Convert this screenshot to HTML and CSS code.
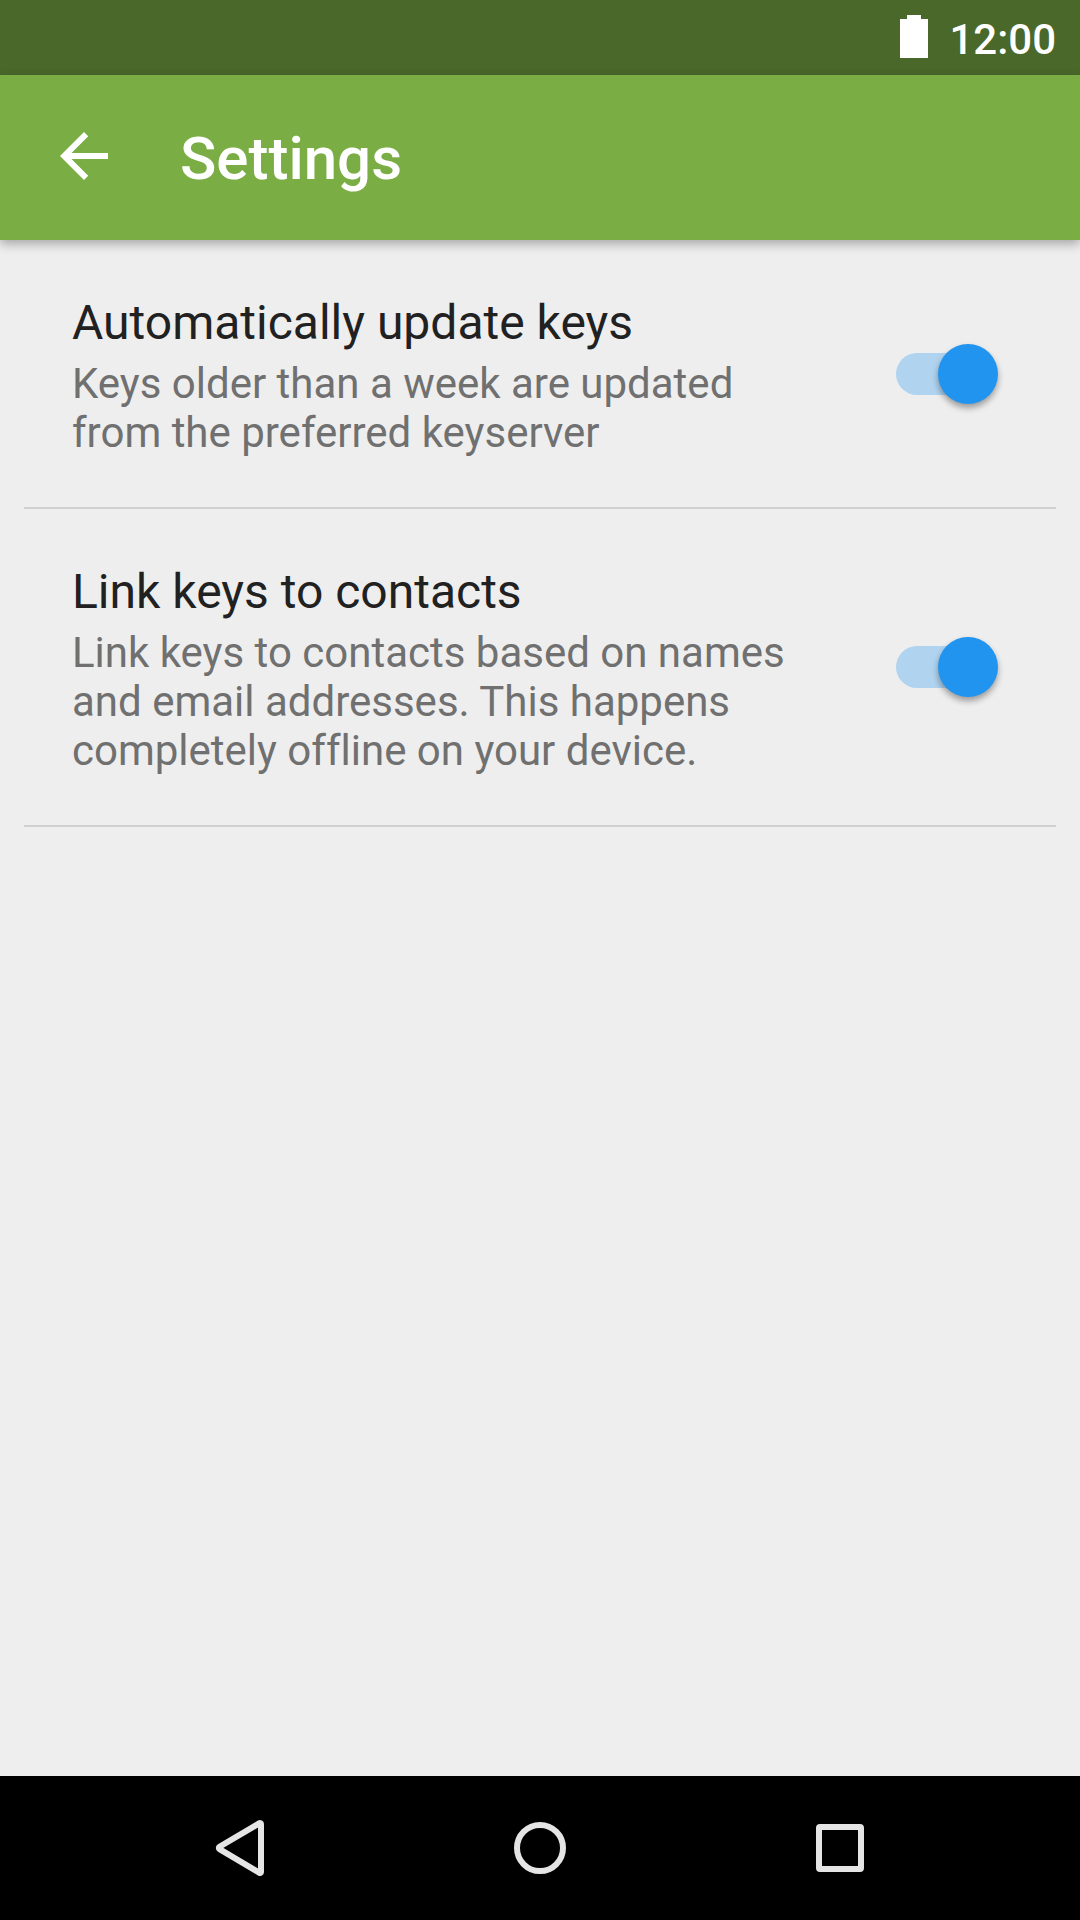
FILE: index.html
```html
<!DOCTYPE html>
<html lang="en">
<head>
  <meta charset="utf-8">
  <meta name="viewport" content="width=device-width, initial-scale=1">
  <title>Settings</title>
  <link rel="stylesheet" href="styles.css">
</head>
<body>
  <div class="status-bar">
    <svg class="battery" viewBox="0 0 28 43" role="img" aria-label="Battery full">
      <path d="M7 0h14v4h7v39H0V4h7z"/>
    </svg>
    <time class="clock">12:00</time>
  </div>

  <header class="toolbar">
    <button class="back-button" type="button" aria-label="Back">
      <svg viewBox="0 0 24 24" aria-hidden="true">
        <path d="M20 11H7.83l5.59-5.59L12 4l-8 8 8 8 1.41-1.41L7.83 13H20v-2z"/>
      </svg>
    </button>
    <h1 class="title">Settings</h1>
  </header>

  <main class="settings">
    <div class="setting">
      <div class="setting-text">
        <label class="setting-title" for="update-keys">Automatically update keys</label>
        <p class="setting-summary" id="update-summary">Keys older than a week are updated from the preferred keyserver</p>
      </div>
      <input class="switch" type="checkbox" role="switch" id="update-keys" aria-describedby="update-summary" checked>
    </div>
    <div class="setting">
      <div class="setting-text">
        <label class="setting-title" for="link-keys">Link keys to contacts</label>
        <p class="setting-summary" id="link-summary">Link keys to contacts based on names and email addresses. This happens completely offline on your device.</p>
      </div>
      <input class="switch" type="checkbox" role="switch" id="link-keys" aria-describedby="link-summary" checked>
    </div>
  </main>

  <nav class="nav-bar" aria-label="System">
    <button class="nav-button" type="button" aria-label="Back">
      <svg viewBox="0 0 72 72" aria-hidden="true"><path d="M57 12v48a1 1 0 0 1-1.500.8L15.500 37.200a1.400 1.400 0 0 1 0-2.400L55.500 11.200a1 1 0 0 1 1.500.8z"/></svg>
    </button>
    <button class="nav-button" type="button" aria-label="Home">
      <svg viewBox="0 0 72 72" aria-hidden="true"><circle cx="36" cy="36" r="23"/></svg>
    </button>
    <button class="nav-button" type="button" aria-label="Recent apps">
      <svg viewBox="0 0 72 72" aria-hidden="true"><rect x="15" y="15" width="42" height="42" rx="1"/></svg>
    </button>
  </nav>
</body>
</html>
```

FILE: styles.css
```css
* {
  box-sizing: border-box;
}

body {
  display: flex;
  flex-direction: column;
  min-height: 100vh;
  margin: 0;
  background: #eeeeee;
  color: #212121;
  font-family: Roboto, "Liberation Sans", sans-serif;
  font-variant-ligatures: none;
}

button {
  padding: 0;
  border: 0;
  background: none;
}

.status-bar {
  display: flex;
  align-items: center;
  justify-content: flex-end;
  gap: 21px;
  height: 75px;
  padding: 0 24px 2px;
  background: #4a682a;
  color: #ffffff;
}

.battery {
  width: 28px;
  height: 43px;
  fill: #ffffff;
}

.clock {
  padding-top: 7px;
  font-size: 42px;
  font-weight: 500;
  line-height: 48px;
}

.toolbar {
  display: flex;
  align-items: center;
  gap: 60px;
  height: 165px;
  padding: 0 48px 3px;
  background: #7bad45;
  color: #ffffff;
  box-shadow: 0 4px 10px rgba(0, 0, 0, 0.3);
}

.back-button svg {
  display: block;
  width: 72px;
  height: 72px;
  fill: #ffffff;
}

.title {
  margin: 0;
  padding-top: 6px;
  font-size: 60px;
  font-weight: 500;
  line-height: 70px;
}

.settings {
  flex: 1;
  padding: 0 24px;
}

.setting {
  display: flex;
  align-items: center;
  gap: 88px;
  padding: 0 58px 0 48px;
  border-bottom: 2px solid #d0d0d0;
}

.setting-text {
  flex: 1;
  padding: 54px 0 50px;
}

.setting-title {
  display: block;
  font-size: 48px;
  line-height: 57px;
}

.setting-summary {
  margin: 8px 0 0;
  color: #707070;
  font-size: 42px;
  line-height: 49px;
}

.switch {
  display: flex;
  flex: none;
  align-items: center;
  width: 102px;
  height: 60px;
  margin: 0;
  appearance: none;
}

.switch::before {
  content: "";
  flex: 1;
  order: 1;
  height: 42px;
  margin-left: -40px;
  border-radius: 21px;
  background: #b9b9b9;
}

.switch::after {
  content: "";
  z-index: 1;
  flex: none;
  width: 60px;
  height: 60px;
  border-radius: 50%;
  background: #fafafa;
  box-shadow: 0 4px 6px rgba(0, 0, 0, 0.35);
}

.switch:checked::before {
  order: 0;
  margin: 0 -40px 0 0;
  background: #b0d3ef;
}

.switch:checked::after {
  background: #2194f0;
}

.nav-bar {
  display: grid;
  grid-template-columns: repeat(3, 1fr);
  height: 144px;
  padding: 0 90px;
  background: #000000;
}

.nav-button {
  display: flex;
  align-items: center;
  justify-content: center;
}

.nav-button svg {
  width: 72px;
  height: 72px;
  fill: none;
  stroke: #e5e5e5;
  stroke-width: 6;
  stroke-linejoin: round;
}
```
